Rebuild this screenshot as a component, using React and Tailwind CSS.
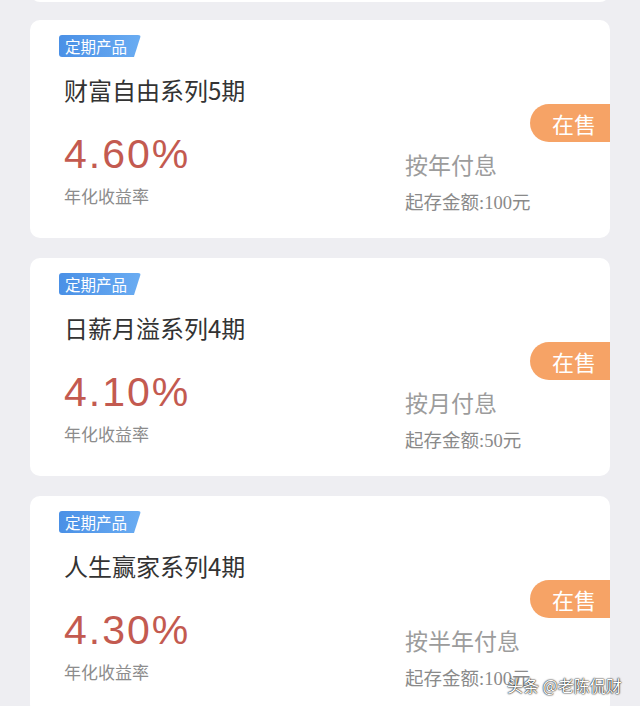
import React from "react";

const products = [
  { name: "财富自由系列5期", rate: "4.60%", pay: "按年付息", min: "100" },
  { name: "日薪月溢系列4期", rate: "4.10%", pay: "按月付息", min: "50" },
  { name: "人生赢家系列4期", rate: "4.30%", pay: "按半年付息", min: "100" },
];

const cjk = "font-['Noto_Sans_CJK_SC',sans-serif]";

function ProductCard({ item }) {
  return (
    <div className="relative w-[580px] h-[218px] shrink-0 rounded-[10px] bg-white pt-[15px] pl-[29px]">
      {/* tag */}
      <div className="flex h-[22px] w-[82px] items-center rounded-l-[3px] rounded-tr-[3px] bg-gradient-to-r from-[#4a90e6] to-[#6aacf2] pl-[6px] [clip-path:polygon(0_0,100%_0,calc(100%-7px)_100%,0_100%)]">
        <span className={`${cjk} text-[15.5px] leading-[22px] text-white`}>定期产品</span>
      </div>

      <div className={`${cjk} mt-[16.5px] pl-[5px] text-[24px] leading-[32px] text-[#333]`}>{item.name}</div>

      <div className="mt-[24.5px] flex items-start pl-[5px]">
        <div className="w-[341px]">
          <div className="font-['Liberation_Sans',sans-serif] text-[41px] font-normal leading-[48px] tracking-[2px] text-[#c35a50]">
            {item.rate}
          </div>
          <div className={`${cjk} mt-[6px] text-[17px] leading-[24px] text-[#8c8c8c]`}>年化收益率</div>
        </div>
        <div className="mt-[19px]">
          <div className={`${cjk} text-[23px] leading-[30px] text-[#9c9c9c]`}>{item.pay}</div>
          <div className="mt-[11.5px] font-['Liberation_Serif','Noto_Sans_CJK_SC',serif] text-[18.5px] leading-[24px] text-[#8a8a8a]">
            起存金额:{item.min}元
          </div>
        </div>
      </div>

      {/* status badge */}
      <div className="absolute right-0 top-[84px] flex h-[38px] w-[80px] items-center justify-end rounded-l-full bg-[#f6a366] pr-[14px]">
        <span className={`${cjk} text-[22px] leading-[38px] text-white`}>在售</span>
      </div>
    </div>
  );
}

export default function App() {
  return (
    <div className="relative h-[706px] w-[640px] overflow-hidden bg-[#eeeef2]">
      <div className="flex flex-col items-center">
        <div className="-mt-[10px] h-[12px] w-[580px] rounded-b-[10px] bg-white" />
        <div className="mt-[18px] flex flex-col gap-[20px]">
          {products.map((p) => (
            <ProductCard key={p.name} item={p} />
          ))}
        </div>
      </div>

      {/* watermark */}
      <div className={`${cjk} absolute left-[507px] top-[674px] text-[16px] leading-[22px] text-white [text-shadow:0_0_2px_#000,0_0_1px_#000]`}>
        头条 @老陈侃财
      </div>
    </div>
  );
}
